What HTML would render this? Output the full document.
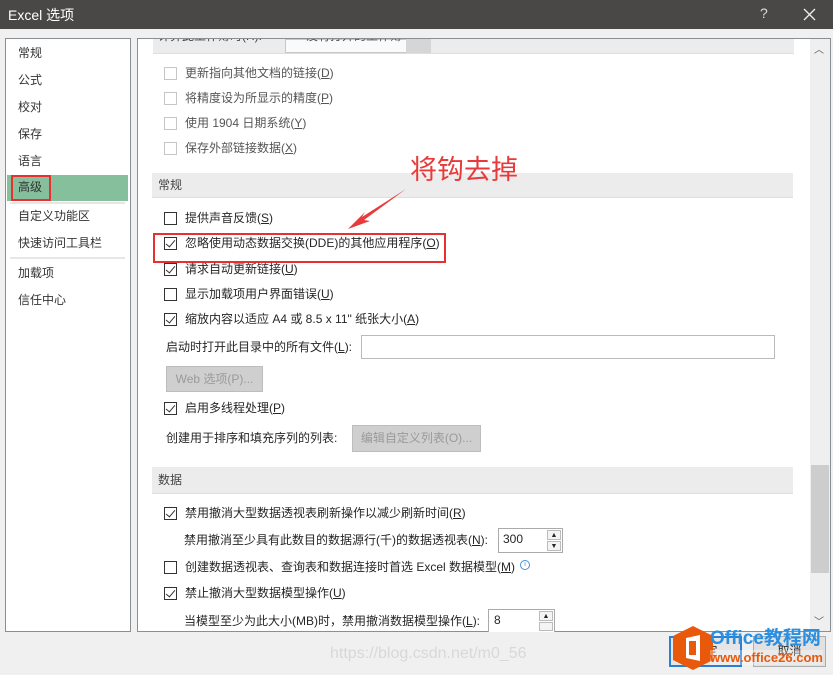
<!DOCTYPE html>
<html><head><meta charset="utf-8"><style>
*{margin:0;padding:0;box-sizing:border-box}
body{width:833px;height:675px;background:#f0f0f0;position:relative;overflow:hidden;font-family:"Liberation Sans","Noto Sans CJK SC",sans-serif;font-size:12px;color:#262626}
.a{position:absolute;white-space:nowrap}
.t{line-height:18px}
.cb{position:absolute;width:13px;height:13px;border:1px solid #333;background:#fff}
.cb.d{border-color:#c6c6c6}
.cb.c::after{content:"";position:absolute;left:3px;top:0px;width:4px;height:8px;border:solid #333;border-width:0 1.3px 1.3px 0;transform:rotate(40deg)}
.hd{position:absolute;left:152px;width:641px;background:#ececec;border-bottom:1px solid #dedede;padding-left:6px;color:#444}
.btn{position:absolute;background:#cfcfcf;border:1px solid #bdbdbd;color:#9a9a9a;text-align:center}
u{text-decoration:underline}
</style></head><body>
<div class="a" style="left:0;top:0;width:833px;height:29px;background:#4a4846"></div>
<div class="a" style="left:8px;top:5px;color:#fff;font-size:14px">Excel 选项</div>
<div class="a" style="left:760px;top:5px;color:#ddd;font-size:14px">?</div>
<svg class="a" style="left:803px;top:8px" width="13" height="13"><path d="M1 1L12 12M12 1L1 12" stroke="#eee" stroke-width="1.3"/></svg>

<div class="a" style="left:5px;top:38px;width:126px;height:594px;background:#fff;border:1px solid #8a8f94"></div>
<div class="a" style="left:7px;top:175px;width:121px;height:26px;background:#86bf9c"></div>
<div class="a" style="left:11px;top:175px;width:40px;height:26px;border:2px solid #e83030"></div>
<div class="a" style="left:10px;top:202px;width:115px;height:2px;background:#e6e6e6"></div>
<div class="a" style="left:10px;top:257px;width:115px;height:2px;background:#e6e6e6"></div>
<div class="a" style="left:18px;top:44px;line-height:18px;color:#333">常规</div>
<div class="a" style="left:18px;top:71px;color:#333">公式</div>
<div class="a" style="left:18px;top:98px;color:#333">校对</div>
<div class="a" style="left:18px;top:125px;color:#333">保存</div>
<div class="a" style="left:18px;top:152px;color:#333">语言</div>
<div class="a" style="left:18px;top:178px;color:#333">高级</div>
<div class="a" style="left:18px;top:207px;color:#333">自定义功能区</div>
<div class="a" style="left:18px;top:234px;color:#333">快速访问工具栏</div>
<div class="a" style="left:18px;top:264px;color:#333">加载项</div>
<div class="a" style="left:18px;top:291px;color:#333">信任中心</div>

<div class="a" style="left:137px;top:38px;width:694px;height:594px;background:#fff;border:1px solid #8a8f94;overflow:hidden">
<div class="a" style="left:672px;top:0;width:20px;height:592px;background:#efefef"></div>
<div class="a" style="left:673px;top:426px;width:18px;height:108px;background:#cdcdcd"></div>
<div class="a" style="left:676px;top:2px;color:#555;font-size:10px">︿</div>
<div class="a" style="left:676px;top:574px;color:#555;font-size:10px">﹀</div>
<div class="a" style="left:15px;top:0;width:641px;height:15px;background:#ececec;border-bottom:1px solid #dedede"></div>
<div class="a" style="left:20px;top:-12px;color:#444">计算此工作簿时(H):</div>
<div class="a" style="left:147px;top:0;width:146px;height:14px;background:#fafafa;border:1px solid #c8c8c8"></div>
<div class="a" style="left:268px;top:0;width:25px;height:14px;background:#d6d6d6"></div>
<div class="a" style="left:168px;top:-12px;color:#555">没有打开的工作簿</div>
</div>

<div class="cb d" style="left:164px;top:67px"></div><div class="a t" style="left:185px;top:64px;color:#555">更新指向其他文档的链接(<u>D</u>)</div>
<div class="cb d" style="left:164px;top:92px"></div><div class="a t" style="left:185px;top:89px;color:#555">将精度设为所显示的精度(<u>P</u>)</div>
<div class="cb d" style="left:164px;top:117px"></div><div class="a t" style="left:185px;top:114px;color:#555">使用 1904 日期系统(<u>Y</u>)</div>
<div class="cb d" style="left:164px;top:142px"></div><div class="a t" style="left:185px;top:139px;color:#555">保存外部链接数据(<u>X</u>)</div>

<div class="hd" style="top:173px;height:25px;line-height:25px">常规</div>
<div class="cb" style="left:164px;top:212px"></div><div class="a t" style="left:185px;top:209px">提供声音反馈(<u>S</u>)</div>
<div class="cb c" style="left:164px;top:237px"></div><div class="a t" style="left:185px;top:234px">忽略使用动态数据交换(DDE)的其他应用程序(<u>O</u>)</div>
<div class="a" style="left:153px;top:233px;width:293px;height:30px;border:2px solid #e83030"></div>
<div class="cb c" style="left:164px;top:263px"></div><div class="a t" style="left:185px;top:260px">请求自动更新链接(<u>U</u>)</div>
<div class="cb" style="left:164px;top:288px"></div><div class="a t" style="left:185px;top:285px">显示加载项用户界面错误(<u>U</u>)</div>
<div class="cb c" style="left:164px;top:313px"></div><div class="a t" style="left:185px;top:310px">缩放内容以适应 A4 或 8.5 x 11" 纸张大小(<u>A</u>)</div>
<div class="a t" style="left:166px;top:338px">启动时打开此目录中的所有文件(<u>L</u>):</div>
<div class="a" style="left:361px;top:335px;width:414px;height:24px;border:1px solid #bbb;background:#fff"></div>
<div class="btn" style="left:166px;top:366px;width:97px;height:26px;line-height:24px">Web 选项(P)...</div>
<div class="cb c" style="left:164px;top:402px"></div><div class="a t" style="left:185px;top:399px">启用多线程处理(<u>P</u>)</div>
<div class="a t" style="left:166px;top:429px">创建用于排序和填充序列的列表:</div>
<div class="btn" style="left:352px;top:425px;width:129px;height:27px;line-height:25px">编辑自定义列表(O)...</div>

<div class="hd" style="top:467px;height:27px;line-height:26px">数据</div>
<div class="cb c" style="left:164px;top:507px"></div><div class="a t" style="left:185px;top:504px">禁用撤消大型数据透视表刷新操作以减少刷新时间(<u>R</u>)</div>
<div class="a t" style="left:184px;top:531px">禁用撤消至少具有此数目的数据源行(千)的数据透视表(<u>N</u>):</div>
<div class="a" style="left:498px;top:528px;width:65px;height:25px;border:1px solid #aaa;background:#fff;padding:3px 4px">300</div>
<div class="a" style="left:547px;top:530px;width:14px;height:10px;border:1px solid #bbb;background:#f4f4f4;font-size:7px;text-align:center;line-height:9px">▲</div>
<div class="a" style="left:547px;top:541px;width:14px;height:10px;border:1px solid #bbb;background:#f4f4f4;font-size:7px;text-align:center;line-height:9px">▼</div>
<div class="cb" style="left:164px;top:561px"></div><div class="a t" style="left:185px;top:558px">创建数据透视表、查询表和数据连接时首选 Excel 数据模型(<u>M</u>)</div>
<div class="a" style="left:520px;top:560px;width:10px;height:10px;border:1px solid #4a90d9;border-radius:50%;font-size:7px;line-height:8px;text-align:center;color:#4a90d9">i</div>
<div class="cb c" style="left:164px;top:587px"></div><div class="a t" style="left:185px;top:584px">禁止撤消大型数据模型操作(<u>U</u>)</div>
<div class="a t" style="left:184px;top:612px">当模型至少为此大小(MB)时，禁用撤消数据模型操作(<u>L</u>):</div>
<div class="a" style="left:488px;top:609px;width:67px;height:23px;border:1px solid #aaa;border-bottom:none;background:#fff;padding:3px 5px">8</div>
<div class="a" style="left:539px;top:611px;width:14px;height:10px;border:1px solid #bbb;background:#f4f4f4;font-size:7px;text-align:center;line-height:9px">▲</div>
<div class="a" style="left:539px;top:622px;width:14px;height:9px;border:1px solid #bbb;background:#f4f4f4"></div>

<div class="a" style="left:410px;top:148px;color:#e83a3a;font-size:27px;font-family:'Noto Sans CJK SC',sans-serif">将钩去掉</div>
<svg class="a" style="left:340px;top:185px" width="70" height="55"><path d="M66 4L22 32L25 27L8 44L30 36L24 35Z" fill="#e83a3a"/></svg>

<div class="a" style="left:669px;top:636px;width:73px;height:31px;border:2px solid #2a7fd4;background:#e5e5e5;text-align:center;line-height:27px">确定</div>
<div class="a" style="left:753px;top:636px;width:73px;height:31px;border:1px solid #adadad;background:#e1e1e1;text-align:center;line-height:29px">取消</div>
<div class="a" style="left:330px;top:645px;color:#d8d8d8;font-size:16px">https://blog.csdn.net/m0_56</div>
<svg class="a" style="left:668px;top:626px" width="50" height="44"><path d="M25 0L45 10L45 34L25 44L5 34L5 10Z" fill="#e8590c"/><path d="M18 12L32 9L32 35L18 32Z" fill="#fff"/><rect x="21" y="15" width="7" height="14" fill="#e8590c"/></svg>
<div class="a" style="left:710px;top:628px;color:#2a8fe0;font-size:19px;font-weight:bold;line-height:22px">Office教程网</div>
<div class="a" style="left:710px;top:650px;color:#e8590c;font-size:13px;font-weight:bold;line-height:15px;background:rgba(255,255,255,.3)">www.office26.com</div>
</body></html>
